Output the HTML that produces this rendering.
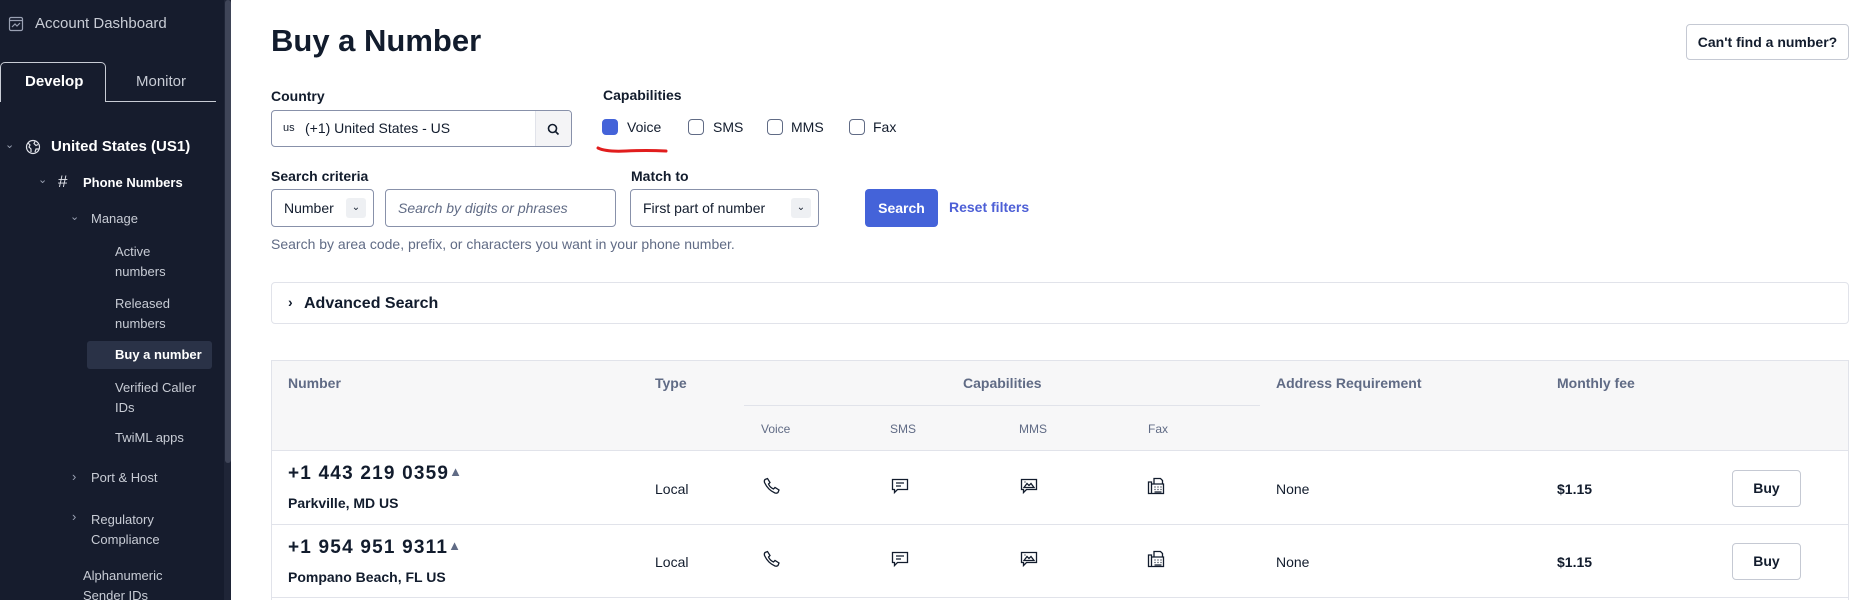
<!DOCTYPE html>
<html><head><meta charset="utf-8"><style>
*{box-sizing:border-box;margin:0;padding:0}
body{width:1855px;height:600px;overflow:hidden;background:#fff;font-family:"Liberation Sans",sans-serif;color:#121c2d;position:relative}
.a{position:absolute;white-space:nowrap}
#sb{position:absolute;left:0;top:0;width:224px;height:600px;background:#161c2d}
#sc{position:absolute;left:224px;top:0;width:7px;height:600px;background:#1f2537}
#sc div{position:absolute;left:1px;top:0;width:6px;height:463px;background:#3f4558;border-radius:3px}
.sw{color:#e1e3ea;font-size:13px}
.lbl{font-size:14px;font-weight:bold;color:#121c2d}
.box{position:absolute;border:1px solid #8891aa;border-radius:4px;background:#fff}
.cb{position:absolute;width:16px;height:16px;border:1px solid #606b85;border-radius:4px;top:119px}
.th{font-size:14px;font-weight:bold;color:#606b85}
.sub{font-size:12px;color:#606b85}
.td{font-size:14px;color:#121c2d}
.buy{position:absolute;left:1732px;width:69px;height:37px;border:1px solid #c5c9d3;border-radius:4px;font-size:14px;font-weight:bold;text-align:center;line-height:35px}
svg.i{position:absolute;width:18px;height:18px;fill:none;stroke:#121c2d;stroke-width:1.3}
</style></head><body>
<div id="sb">
 <svg class="a" style="left:8px;top:16px" width="16" height="16" viewBox="0 0 16 16" fill="none" stroke="#9aa1b3" stroke-width="1.2"><rect x="1.5" y="1.5" width="13" height="13" rx="1.5"/><path d="M1.5 4.5h13M4 11l3-3 2 2 3-3"/></svg>
 <div class="a sw" style="left:35px;top:15px;font-size:15px;color:#c8ccd5">Account Dashboard</div>
 <div class="a" style="left:0;top:62px;width:106px;height:40px;border:1px solid #c8ccd5;border-bottom:none;border-radius:5px 5px 0 0"></div>
 <div class="a" style="left:106px;top:101px;width:110px;height:1px;background:#c8ccd5"></div>
 <div class="a" style="left:25px;top:73px;font-size:15px;font-weight:bold;color:#fff">Develop</div>
 <div class="a" style="left:136px;top:73px;font-size:15px;color:#c8ccd5">Monitor</div>
 <div class="a" style="left:5px;top:138px;font-size:11px;color:#9aa1b3">&#8964;</div>
 <svg class="a" style="left:25px;top:139px" width="16" height="16" viewBox="0 0 16 16" fill="none" stroke="#e1e3ea" stroke-width="1.2"><circle cx="8" cy="8" r="6.5"/><path d="M3 4l2 2-1 2 2 2v3M10 2.5l-1 2 2 2 2-1M10 13l1-3 3 0"/></svg>
 <div class="a" style="left:51px;top:138px;font-size:15px;font-weight:bold;color:#fff">United States (US1)</div>
 <div class="a" style="left:38px;top:173px;font-size:11px;color:#9aa1b3">&#8964;</div>
 <div class="a" style="left:58px;top:172px;font-size:17px;color:#e1e3ea">#</div>
 <div class="a" style="left:83px;top:175px;font-size:13px;font-weight:bold;color:#fff">Phone Numbers</div>
 <div class="a" style="left:70px;top:210px;font-size:11px;color:#9aa1b3">&#8964;</div>
 <div class="a sw" style="left:91px;top:211px;color:#c8ccd5">Manage</div>
 <div class="a sw" style="left:115px;top:242px;line-height:20px;color:#c8ccd5">Active<br>numbers</div>
 <div class="a sw" style="left:115px;top:294px;line-height:20px;color:#c8ccd5">Released<br>numbers</div>
 <div class="a" style="left:87px;top:341px;width:125px;height:28px;background:#2a3247;border-radius:3px"></div>
 <div class="a" style="left:115px;top:347px;font-size:13px;font-weight:bold;color:#fff">Buy a number</div>
 <div class="a sw" style="left:115px;top:378px;line-height:20px;color:#c8ccd5">Verified Caller<br>IDs</div>
 <div class="a sw" style="left:115px;top:430px;color:#c8ccd5">TwiML apps</div>
 <div class="a" style="left:72px;top:469px;font-size:13px;color:#9aa1b3">&#8250;</div>
 <div class="a sw" style="left:91px;top:470px;color:#c8ccd5">Port &amp; Host</div>
 <div class="a" style="left:72px;top:509px;font-size:13px;color:#9aa1b3">&#8250;</div>
 <div class="a sw" style="left:91px;top:510px;line-height:20px;color:#c8ccd5">Regulatory<br>Compliance</div>
 <div class="a sw" style="left:83px;top:566px;line-height:20px;color:#c8ccd5">Alphanumeric<br>Sender IDs</div>
</div>
<div id="sc"><div></div></div>

<div class="a" style="left:271px;top:23px;font-size:31px;font-weight:bold">Buy a Number</div>
<div class="a" style="left:1686px;top:24px;width:163px;height:36px;border:1px solid #c5c9d3;border-radius:4px;font-size:14px;font-weight:bold;text-align:center;line-height:34px">Can't find a number?</div>

<div class="a lbl" style="left:271px;top:88px">Country</div>
<div class="box" style="left:271px;top:110px;width:301px;height:37px;overflow:hidden">
 <div class="a" style="left:11px;top:11px;font-size:11px;color:#121c2d">us</div>
 <div class="a" style="left:33px;top:9px;font-size:14px">(+1) United States - US</div>
 <div class="a" style="left:263px;top:0;width:37px;height:37px;background:#f4f4f6;border-left:1px solid #e1e3ea"></div>
 <svg class="a" style="left:275px;top:12px" width="13" height="13" viewBox="0 0 13 13" fill="none" stroke="#121c2d" stroke-width="1.6"><circle cx="5.5" cy="5.5" r="4"/><path d="M8.5 8.5l3 3"/></svg>
</div>

<div class="a lbl" style="left:603px;top:87px">Capabilities</div>
<div class="cb" style="left:602px;background:#4463d9;border-color:#4463d9"></div>
<div class="a td" style="left:627px;top:119px">Voice</div>
<div class="cb" style="left:688px"></div><div class="a td" style="left:713px;top:119px">SMS</div>
<div class="cb" style="left:767px"></div><div class="a td" style="left:791px;top:119px">MMS</div>
<div class="cb" style="left:849px"></div><div class="a td" style="left:873px;top:119px">Fax</div>
<svg class="a" style="left:596px;top:144px" width="75" height="12" viewBox="0 0 75 12"><path d="M2 4 Q10 8 30 7 T70 7" fill="none" stroke="#e11d1d" stroke-width="3" stroke-linecap="round"/></svg>

<div class="a lbl" style="left:271px;top:168px">Search criteria</div>
<div class="box" style="left:271px;top:189px;width:103px;height:38px">
 <div class="a" style="left:12px;top:10px;font-size:14px">Number</div>
 <div class="a" style="left:74px;top:8px;width:20px;height:20px;background:#eef0f3;border-radius:3px;font-size:10px;text-align:center;line-height:20px">&#8964;</div>
</div>
<div class="box" style="left:385px;top:189px;width:231px;height:38px">
 <div class="a" style="left:12px;top:10px;font-size:14px;font-style:italic;color:#606b85">Search by digits or phrases</div>
</div>
<div class="a lbl" style="left:631px;top:168px">Match to</div>
<div class="box" style="left:630px;top:189px;width:189px;height:38px">
 <div class="a" style="left:12px;top:10px;font-size:14px">First part of number</div>
 <div class="a" style="left:160px;top:8px;width:20px;height:20px;background:#eef0f3;border-radius:3px;font-size:10px;text-align:center;line-height:20px">&#8964;</div>
</div>
<div class="a" style="left:865px;top:189px;width:73px;height:38px;background:#4463d9;border-radius:4px;color:#fff;font-size:14px;font-weight:bold;text-align:center;line-height:38px">Search</div>
<div class="a" style="left:949px;top:199px;font-size:14px;font-weight:bold;color:#4d5fd6">Reset filters</div>
<div class="a" style="left:271px;top:236px;font-size:14px;color:#606b85">Search by area code, prefix, or characters you want in your phone number.</div>

<div class="a" style="left:271px;top:282px;width:1578px;height:42px;border:1px solid #e1e3ea;border-radius:4px"></div>
<div class="a" style="left:288px;top:294px;font-size:14px;font-weight:bold">&#8250;</div>
<div class="a" style="left:304px;top:295px;font-size:16px;font-weight:bold">Advanced Search</div>

<div class="a" style="left:271px;top:360px;width:1578px;height:240px;border:1px solid #e1e3ea;border-bottom:none"></div>
<div class="a" style="left:272px;top:361px;width:1576px;height:90px;background:#f7f7f8;border-bottom:1px solid #e1e3ea"></div>
<div class="a th" style="left:288px;top:375px">Number</div>
<div class="a th" style="left:655px;top:375px">Type</div>
<div class="a th" style="left:963px;top:375px">Capabilities</div>
<div class="a" style="left:744px;top:405px;width:516px;height:1px;background:#e1e3ea"></div>
<div class="a th" style="left:1276px;top:375px">Address Requirement</div>
<div class="a th" style="left:1557px;top:375px">Monthly fee</div>
<div class="a sub" style="left:761px;top:422px">Voice</div>
<div class="a sub" style="left:890px;top:422px">SMS</div>
<div class="a sub" style="left:1019px;top:422px">MMS</div>
<div class="a sub" style="left:1148px;top:422px">Fax</div>

<div class="a" style="left:272px;top:524px;width:1576px;height:1px;background:#e1e3ea"></div>
<div class="a" style="left:272px;top:597px;width:1576px;height:1px;background:#e1e3ea"></div>

<div class="a" style="left:288px;top:463px;font-size:19px;font-weight:bold;letter-spacing:1.2px">+1 443 219 0359<span style="font-size:13px;color:#606b85;vertical-align:3px">&#9650;</span></div>
<div class="a" style="left:288px;top:495px;font-size:14px;font-weight:bold">Parkville, MD US</div>
<div class="a" style="left:288px;top:537px;font-size:19px;font-weight:bold;letter-spacing:1.2px">+1 954 951 9311<span style="font-size:13px;color:#606b85;vertical-align:3px">&#9650;</span></div>
<div class="a" style="left:288px;top:569px;font-size:14px;font-weight:bold">Pompano Beach, FL US</div>

<div class="a td" style="left:655px;top:481px">Local</div>
<div class="a td" style="left:655px;top:554px">Local</div>
<div class="a td" style="left:1276px;top:481px">None</div>
<div class="a td" style="left:1276px;top:554px">None</div>
<div class="a td" style="left:1557px;top:481px;font-weight:bold">$1.15</div>
<div class="a td" style="left:1557px;top:554px;font-weight:bold">$1.15</div>
<div class="buy" style="top:470px">Buy</div>
<div class="buy" style="top:543px">Buy</div>

<svg class="i" style="left:762px;top:477px" viewBox="0 0 18 18"><path d="M3 2.5l2.5-1 2.5 4-1.5 1.5q1.5 3.5 5 5l1.5-1.5 4 2.5-1 2.5q-1 1-3 .5Q6 13 2.5 5.5 2 3.5 3 2.5z"/></svg>
<svg class="i" style="left:891px;top:477px" viewBox="0 0 18 18"><path d="M1.5 2.5h15v10h-10l-3 3v-3h-2z M5 6h8M5 9h5"/></svg>
<svg class="i" style="left:1020px;top:477px" viewBox="0 0 18 18"><path d="M1.5 2.5h15v10h-10l-3 3v-3h-2z M4 10.5l3-4 2 2 2-2 3 4z M4.5 5h1"/></svg>
<svg class="i" style="left:1147px;top:477px" viewBox="0 0 18 18"><path d="M1.5 5h3v11.5h-3z M4.5 7h12v9.5h-12 M7 7V1.5h6.5l2 2V7 M7.5 10h1M10.5 10h1M13.5 10h1M7.5 12.5h1M10.5 12.5h1M13.5 12.5h1M7.5 15h7"/></svg>
<svg class="i" style="left:762px;top:550px" viewBox="0 0 18 18"><path d="M3 2.5l2.5-1 2.5 4-1.5 1.5q1.5 3.5 5 5l1.5-1.5 4 2.5-1 2.5q-1 1-3 .5Q6 13 2.5 5.5 2 3.5 3 2.5z"/></svg>
<svg class="i" style="left:891px;top:550px" viewBox="0 0 18 18"><path d="M1.5 2.5h15v10h-10l-3 3v-3h-2z M5 6h8M5 9h5"/></svg>
<svg class="i" style="left:1020px;top:550px" viewBox="0 0 18 18"><path d="M1.5 2.5h15v10h-10l-3 3v-3h-2z M4 10.5l3-4 2 2 2-2 3 4z M4.5 5h1"/></svg>
<svg class="i" style="left:1147px;top:550px" viewBox="0 0 18 18"><path d="M1.5 5h3v11.5h-3z M4.5 7h12v9.5h-12 M7 7V1.5h6.5l2 2V7 M7.5 10h1M10.5 10h1M13.5 10h1M7.5 12.5h1M10.5 12.5h1M13.5 12.5h1M7.5 15h7"/></svg>
</body></html>
